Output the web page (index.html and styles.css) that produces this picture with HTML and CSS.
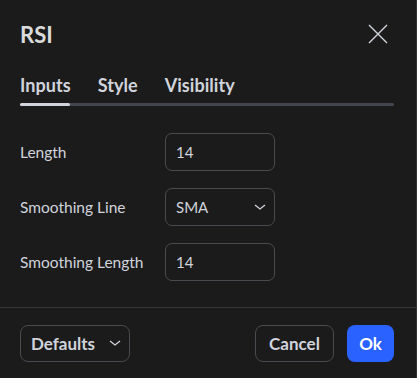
FILE: index.html
```html
<html>
  <head>
    <meta charset="utf-8" />
    <title>RSI</title>
    <link rel="stylesheet" href="styles.css">
  </head>
  <body>
    <div class="dialog">
      <header>
        <div class="title">RSI</div>
        <button class="close">
          <svg width="20" height="20" viewBox="0 0 20 20"><path d="M1 1 L19 19 M19 1 L1 19" stroke="#d1d4dc" stroke-width="1.4" fill="none"/></svg>
        </button>
      </header>

      <nav class="tabs">
        <div class="tab active">Inputs</div>
        <div class="tab">Style</div>
        <div class="tab">Visibility</div>
      </nav>
      <div class="track"><div class="thumb"></div></div>

      <main>
        <div class="row">
          <label>Length</label>
          <div class="field">14</div>
        </div>
        <div class="row">
          <label>Smoothing Line</label>
          <div class="field select">SMA
            <svg width="12" height="8" viewBox="0 0 12 8"><path d="M1 2 L6 6 L11 2" stroke="#d1d4dc" stroke-width="1.3" fill="none"/></svg>
          </div>
        </div>
        <div class="row">
          <label>Smoothing Length</label>
          <div class="field">14</div>
        </div>
      </main>

      <footer>
        <button class="button defaults">Defaults
          <svg width="12" height="8" viewBox="0 0 12 8"><path d="M1 2 L6 6 L11 2" stroke="#d1d4dc" stroke-width="1.3" fill="none"/></svg>
        </button>
        <div class="actions">
          <button class="button cancel">Cancel</button>
          <button class="button ok">Ok</button>
        </div>
      </footer>
    </div>
  </body>
</html>
```

FILE: styles.css
```css
html, body {
  height: 100%;
  margin: 0;
}

body {
  background-color: #1b1b1b;
  font-family: Lato, "Noto Sans", sans-serif;
  color: #d1d4dc;
  overflow: hidden;
}

.dialog {
  display: flex;
  flex-direction: column;
  height: 100%;
  border-right: 1px solid #333336;
  box-sizing: border-box;
}

header {
  display: flex;
  justify-content: space-between;
  align-items: center;
  padding: 20px 28px 0 20px;
  height: 28px;
}

.title {
  font-size: 22px;
  font-weight: bold;
  color: #dbdbdb;
}

.close {
  background: none;
  border: none;
  padding: 0;
  width: 20px;
  height: 20px;
  cursor: pointer;
}

.tabs {
  display: flex;
  gap: 27px;
  padding: 26px 20px 0;
}

.tab {
  font-size: 18px;
  font-weight: bold;
  letter-spacing: 0.05px;
  line-height: 22px;
  color: #d1d4dc;
}

.track {
  margin: 7px 22px 0 20px;
  height: 3px;
  border-radius: 2px;
  background-color: #434651;
}
.thumb {
  width: 50px;
  height: 100%;
  border-radius: 2px;
  background-color: #d1d4dc;
}

main {
  flex: 1 1 0;
  display: flex;
  flex-direction: column;
  gap: 17px;
  padding: 27px 20px 0;
}

.row {
  display: flex;
  align-items: center;
}

label {
  width: 145px;
  font-size: 15.5px;
}

.field {
  box-sizing: border-box;
  width: 110px;
  height: 38px;
  border: 1px solid #4a4a50;
  border-radius: 7px;
  padding: 0 8px 0 10px;
  display: flex;
  align-items: center;
  justify-content: space-between;
  font-size: 15px;
}

footer {
  border-top: 1px solid #363638;
  height: 70px;
  display: flex;
  align-items: center;
  justify-content: space-between;
  padding: 0 22px 0 20px;
}

.actions {
  display: flex;
  gap: 13px;
}

.button {
  box-sizing: border-box;
  height: 37px;
  border-radius: 8px;
  border: 1px solid #4a4a50;
  background: none;
  color: #d1d4dc;
  font-family: inherit;
  font-size: 17px;
  font-weight: bold;
  padding: 0 12px;
  cursor: pointer;
}
.defaults {
  width: 110px;
  display: flex;
  align-items: center;
  justify-content: space-between;
  padding: 0 8px 0 10px;
}
.cancel {
  width: 79px;
}
.ok {
  width: 47px;
  border: none;
  background-color: #2962ff;
  color: #ffffff;
}
```
